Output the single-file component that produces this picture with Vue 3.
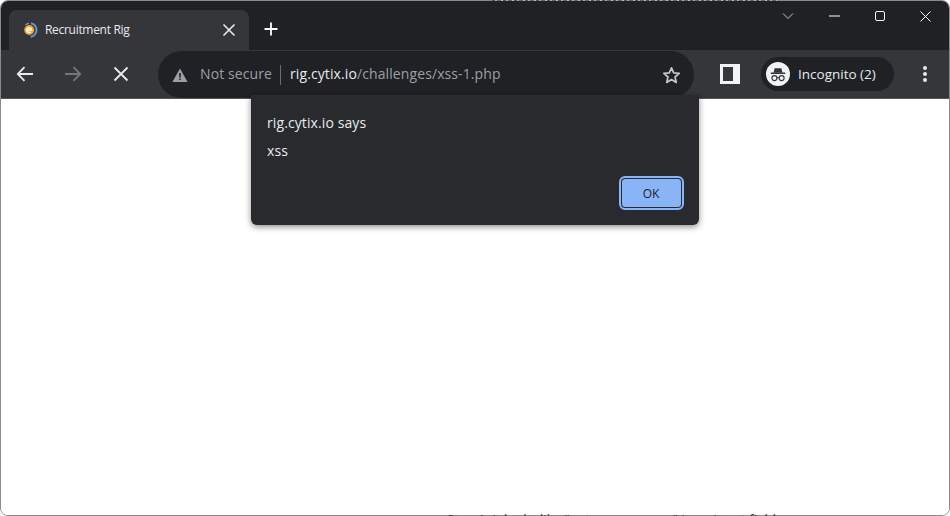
<template>
  <div class="desktop">
    <div class="window">
      <div class="titlebar">
        <div class="tab">
          <svg class="tab__favicon" width="16" height="16" viewBox="0 0 16 16" fill="none">
            <path d="M9 1.3A6.8 6.8 0 0 1 8.6 14.7" stroke="#5b9be0" stroke-width="2" />
            <path d="M7 1.4A6.8 6.8 0 0 0 3.5 3" stroke="#5b9be0" stroke-width="1.4" />
            <circle cx="7.2" cy="8" r="5" fill="#f7a21b" />
            <path d="M4.8 8H9.6A2.4 2.4 0 1 0 8.9 9.8" stroke="#fff" stroke-width="1.5" />
          </svg>
          <span class="tab__title">Recruitment Rig</span>
          <svg class="tab__close" width="14" height="14" viewBox="0 0 14 14" fill="none">
            <path d="M1.5 1.5L12.5 12.5M12.5 1.5L1.5 12.5" stroke="#e8eaed" stroke-width="1.6" />
          </svg>
        </div>
        <svg class="new-tab" width="14" height="14" viewBox="0 0 14 14" fill="none">
          <path d="M7 0.5V13.5M0.5 7H13.5" stroke="#fff" stroke-width="1.8" />
        </svg>
        <div class="caption">
          <svg width="12" height="8" viewBox="0 0 12 8" fill="none">
            <path d="M1 1.5L6 6.5L11 1.5" stroke="#c4c7c9" stroke-width="1" />
          </svg>
          <svg width="11" height="2" viewBox="0 0 11 2" fill="none">
            <path d="M0 1H11" stroke="#fff" stroke-width="1" />
          </svg>
          <svg width="10" height="10" viewBox="0 0 10 10" fill="none">
            <rect x="0.5" y="0.5" width="9" height="9" rx="1.5" stroke="#fff" stroke-width="1" />
          </svg>
          <svg width="11" height="11" viewBox="0 0 11 11" fill="none">
            <path d="M0.5 0.5L10.5 10.5M10.5 0.5L0.5 10.5" stroke="#fff" stroke-width="1" />
          </svg>
        </div>
      </div>

      <div class="toolbar">
        <svg class="nav-icon" width="18" height="16" viewBox="0 0 18 16" fill="none">
          <path d="M17 8H2M8.5 1.2L1.8 8L8.5 14.8" stroke="#e8eaed" stroke-width="1.8" />
        </svg>
        <svg class="nav-icon" width="18" height="16" viewBox="0 0 18 16" fill="none">
          <path d="M1 8H16M9.5 1.2L16.2 8L9.5 14.8" stroke="#75777a" stroke-width="1.8" />
        </svg>
        <svg class="nav-icon" width="16" height="16" viewBox="0 0 16 16" fill="none">
          <path d="M1.5 1.5L14.5 14.5M14.5 1.5L1.5 14.5" stroke="#e8eaed" stroke-width="1.8" />
        </svg>

        <div class="omnibox">
          <svg width="16" height="14" viewBox="0 0 16 14">
            <path d="M8 0.5L15.6 14H0.4Z" fill="#9aa0a6" />
            <path d="M7.2 5H8.8V9.4H7.2ZM7.2 10.4H8.8V12H7.2Z" fill="#202124" />
          </svg>
          <span class="omnibox__secure">Not secure</span>
          <span class="omnibox__sep"></span>
          <span class="omnibox__url"><span class="omnibox__host">rig.cytix.io</span>/challenges/xss-1.php</span>
          <svg class="omnibox__star" width="19" height="18" viewBox="0 0 19 18" fill="none">
            <path d="M9.5 1.8L11.7 6.9L17.2 7.4L13 11L14.3 16.4L9.5 13.5L4.7 16.4L6 11L1.8 7.4L7.3 6.9Z" stroke="#c4c7c9" stroke-width="1.7" stroke-linejoin="round" />
          </svg>
        </div>

        <svg class="side-panel" width="20" height="20" viewBox="0 0 20 20">
          <path d="M0 0H20V20H0ZM3 3V17H13V3Z" fill="#f1f3f4" fill-rule="evenodd" />
        </svg>

        <div class="profile">
          <span class="profile__avatar">
            <svg width="20" height="16" viewBox="0 0 20 16" fill="none">
              <path d="M6.2 1H13.8L15 6H5Z" fill="#35363a" />
              <path d="M2 6.6H18" stroke="#35363a" stroke-width="1.5" />
              <circle cx="6" cy="12" r="2.8" stroke="#35363a" stroke-width="1.3" />
              <circle cx="14" cy="12" r="2.8" stroke="#35363a" stroke-width="1.3" />
              <path d="M8.8 11.6H11.2" stroke="#35363a" stroke-width="1.2" />
            </svg>
          </span>
          <span class="profile__label">Incognito (2)</span>
        </div>

        <svg class="menu" width="6" height="18" viewBox="0 0 6 18">
          <circle cx="3" cy="3" r="2" fill="#e8eaed" />
          <circle cx="3" cy="9" r="2" fill="#e8eaed" />
          <circle cx="3" cy="15" r="2" fill="#e8eaed" />
        </svg>
      </div>

      <div class="page"></div>

      <div class="dialog">
        <div class="dialog__origin">rig.cytix.io says</div>
        <div class="dialog__message">xss</div>
        <div class="dialog__actions">
          <button type="button" class="dialog__ok">OK</button>
        </div>
      </div>
    </div>

    <!-- page behind the window, only a pixel row of it shows -->
    <div class="behind-top"></div>
    <div class="behind-bottom">Step 1: it looks like "enter your name" is an input field</div>
  </div>
</template>

<script setup>
</script>

<style>
html,
body {
  margin: 0;
  overflow: hidden;
}
</style>

<style scoped>
.desktop {
  position: relative;
  width: 950px;
  height: 516px;
  background: #fff;
  overflow: hidden;
  font-family: "Open Sans", "Noto Sans", sans-serif;
}

.behind-top {
  position: absolute;
  left: 492px;
  top: 0;
  width: 285px;
  height: 1px;
  background: repeating-linear-gradient(90deg, #555 0 3px, #aaa 3px 5px, #666 5px 9px, #bbb 9px 11px);
}

.behind-bottom {
  position: absolute;
  left: 447px;
  top: 512px;
  font-size: 13px;
  line-height: 14px;
  letter-spacing: 0.1px;
  color: #333;
  white-space: nowrap;
}

.window {
  position: relative;
  box-sizing: border-box;
  width: 950px;
  height: 516px;
  display: flex;
  flex-direction: column;
  border: 1px solid #8a8a8a;
  border-radius: 8px;
  overflow: hidden;
  background: #fff;
}

.titlebar {
  display: flex;
  align-items: flex-start;
  height: 49px;
  flex-shrink: 0;
  background: #202124;
}

.tab {
  display: flex;
  align-items: center;
  width: 240px;
  height: 40px;
  margin: 9px 0 0 8px;
  padding: 0 13px;
  box-sizing: border-box;
  background: #35363a;
  border-radius: 8px 8px 0 0;
}

.tab__favicon {
  flex-shrink: 0;
}

.tab__title {
  flex: 1;
  margin-left: 7px;
  margin-top: -1px;
  font-size: 12px;
  color: #e8eaed;
  letter-spacing: -0.3px;
}

.tab__close {
  margin-left: -2px;
}

.new-tab {
  margin: 21px 0 0 15px;
}

.caption {
  display: flex;
  align-items: center;
  gap: 35px;
  margin: 9px 18px 0 auto;
  height: 12px;
}

.toolbar {
  display: flex;
  align-items: center;
  height: 49px;
  flex-shrink: 0;
  background: #35363a;
  padding-left: 15px;
  border-bottom: 1px solid #55565a;
  box-sizing: border-box;
}

.nav-icon {
  flex-shrink: 0;
  margin-right: 30px;
}

.nav-icon:nth-of-type(2) {
  margin-right: 31px;
}

.nav-icon:nth-of-type(3) {
  margin-right: 29px;
}

.omnibox {
  display: flex;
  align-items: center;
  width: 536px;
  height: 47px;
  margin-top: 1px;
  padding: 0 13px 0 14px;
  box-sizing: border-box;
  background: #202124;
  border-radius: 24px;
}

.omnibox__secure {
  margin-left: 12px;
  margin-top: -2px;
  font-size: 14px;
  letter-spacing: 0.1px;
  color: #9aa0a6;
}

.omnibox__sep {
  width: 1px;
  height: 20px;
  margin: 0 9px 0 8px;
  background: #6b6d70;
}

.omnibox__url {
  flex: 1;
  margin-top: -2px;
  font-size: 14px;
  letter-spacing: 0.1px;
  color: #9aa0a6;
}

.omnibox__host {
  color: #e8eaed;
}

.side-panel {
  margin-left: 26px;
  flex-shrink: 0;
}

.profile {
  display: flex;
  align-items: center;
  width: 133px;
  height: 34px;
  margin-left: 21px;
  padding-left: 5px;
  box-sizing: border-box;
  background: #202124;
  border-radius: 17px;
}

.profile__avatar {
  display: flex;
  align-items: center;
  justify-content: center;
  width: 24px;
  height: 24px;
  border-radius: 50%;
  background: #f1f3f4;
}

.profile__avatar svg {
  width: 18px;
  height: 15px;
}

.profile__label {
  margin-left: 8px;
  font-size: 13.5px;
  color: #e8eaed;
}

.menu {
  margin-left: 28px;
  flex-shrink: 0;
}

.page {
  flex: 1;
  background: #fff;
}

.dialog {
  position: absolute;
  left: 250px;
  top: 94px;
  width: 448px;
  height: 130px;
  box-sizing: border-box;
  padding: 19px 17px 0 16px;
  background: #292a2d;
  border-radius: 0 0 6px 6px;
  box-shadow: 0 2px 6px rgba(0, 0, 0, 0.45);
  color: #e8eaed;
}

.dialog__origin {
  font-size: 14px;
  line-height: 18px;
  letter-spacing: 0.1px;
}

.dialog__message {
  margin-top: 10px;
  font-size: 14px;
  line-height: 18px;
  letter-spacing: 0.1px;
}

.dialog__actions {
  display: flex;
  justify-content: flex-end;
  margin-top: 18px;
}

.dialog__ok {
  width: 61px;
  height: 30px;
  padding: 0 1px 0 0;
  font-family: inherit;
  font-size: 12px;
  color: #202124;
  background: #8ab4f8;
  border: 1px solid #292a2d;
  border-radius: 4px;
  outline: 2px solid #8ab4f8;
  outline-offset: 0;
}
</style>
